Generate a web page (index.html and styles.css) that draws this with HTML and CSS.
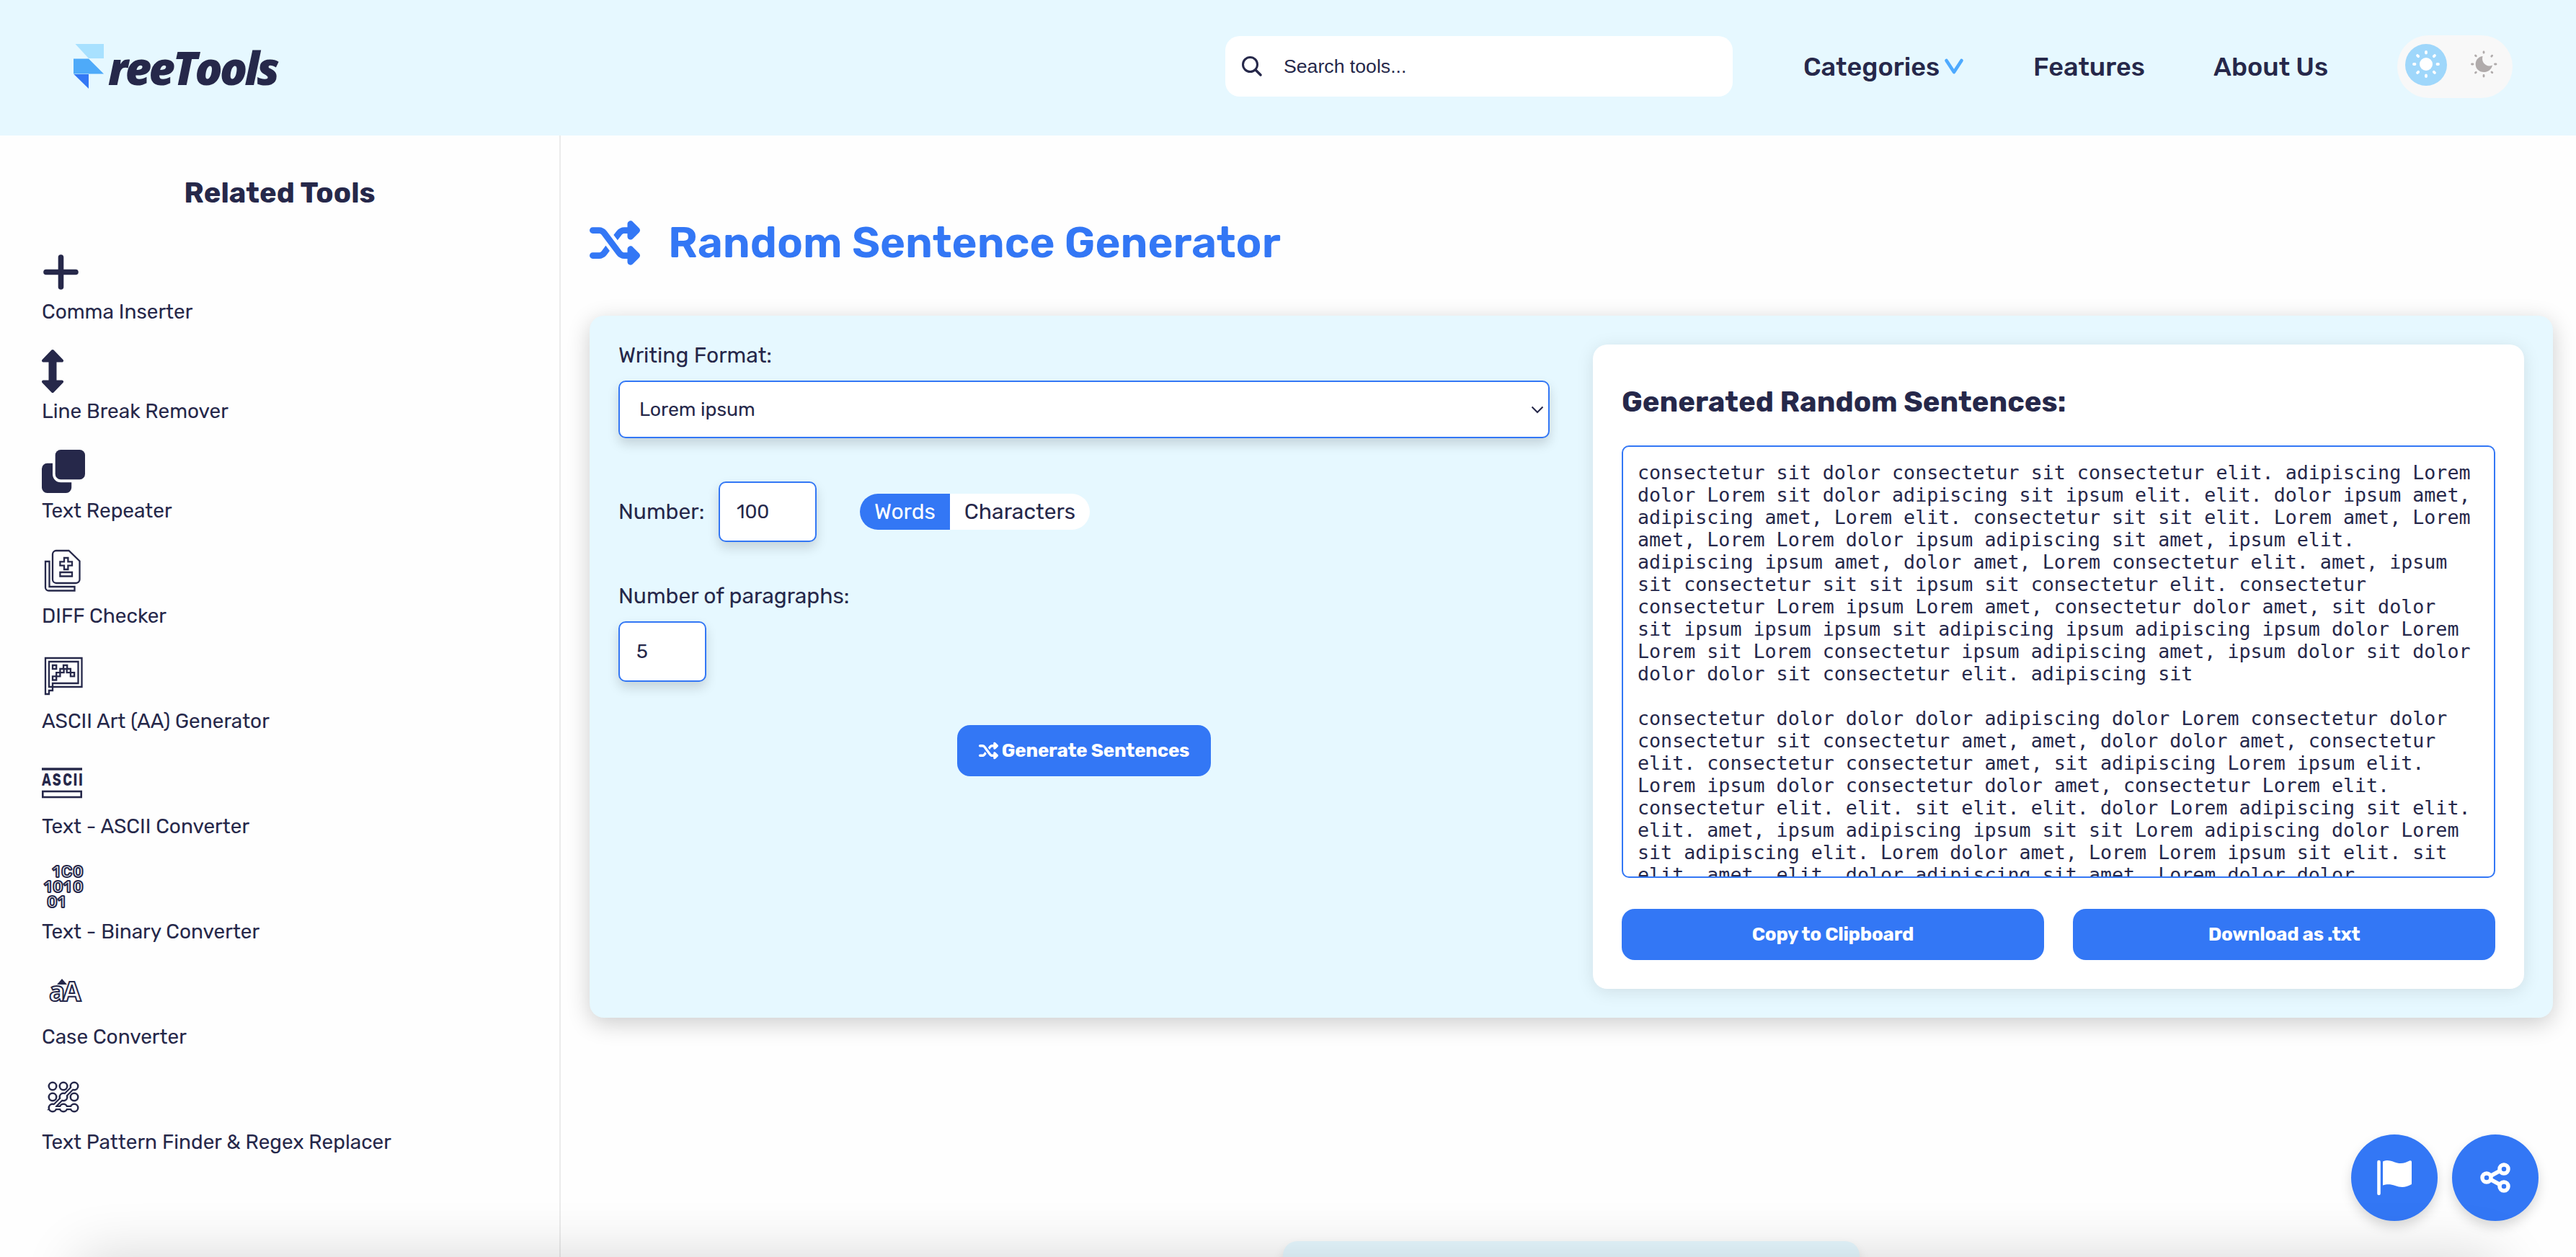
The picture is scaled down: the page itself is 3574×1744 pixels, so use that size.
FILE: index.html
```html
<!DOCTYPE html>
<html lang="en">
<head>
    <meta charset="UTF-8">
    <meta name="viewport" content="width=device-width, initial-scale=1.0">
    <title>Random Sentence Generator</title>
    <link rel="stylesheet" href="styles.css">
</head>
<body>
    <svg class="defs" width="0" height="0">
        <symbol id="shuffle" viewBox="0 0 512 512">
            <path fill="currentColor" d="M403.8 34.4c12-5 25.7-2.2 34.9 6.9l64 64c6 6 9.4 14.1 9.4 22.6s-3.4 16.6-9.4 22.6l-64 64c-9.2 9.2-22.9 11.9-34.9 6.9s-19.8-16.6-19.8-29.6V160H352c-10.1 0-19.6 4.7-25.6 12.8L284 229.3 244 176l31.2-41.6C293.3 110.2 321.8 96 352 96h32V64c0-12.9 7.8-24.6 19.8-29.6zM164 282.7L204 336l-31.2 41.6C154.7 401.8 126.2 416 96 416H32c-17.7 0-32-14.3-32-32s14.3-32 32-32H96c10.1 0 19.6-4.7 25.6-12.8L164 282.7zm274.6 188c-9.2 9.2-22.9 11.9-34.9 6.9s-19.8-16.6-19.8-29.6V416H352c-30.2 0-58.7-14.2-76.8-38.4L121.6 172.8c-6-8.1-15.5-12.8-25.6-12.8H32c-17.7 0-32-14.3-32-32s14.3-32 32-32H96c30.2 0 58.7 14.2 76.8 38.4L326.4 339.2c6 8.1 15.5 12.8 25.6 12.8h32V320c0-12.9 7.8-24.6 19.8-29.6s25.7-2.2 34.9 6.9l64 64c6 6 9.4 14.1 9.4 22.6s-3.4 16.6-9.4 22.6l-64 64z"/>
        </symbol>
    </svg>

    <header class="header">
        <a class="logo">
            <svg width="42" height="62" viewBox="0 0 42 62">
                <path fill="#a8e1ff" d="M2.500 0H42V20H21z"/>
                <path fill="#4eaaf9" d="M0 20.500H21L42 41.500H0z"/>
                <path fill="#3377f5" d="M0.500 42H21V62z"/>
            </svg>
            <span class="logo-text">reeTools</span>
        </a>
        <div class="search">
            <svg width="30" height="30" viewBox="0 0 30 30">
                <circle cx="12.500" cy="12.500" r="10" fill="none" stroke="#26284a" stroke-width="3"/>
                <path d="M20 20l7 7" stroke="#26284a" stroke-width="3.500" stroke-linecap="round"/>
            </svg>
            <input type="text" placeholder="Search tools...">
        </div>
        <nav class="nav">
            <a class="categories">Categories
                <svg width="26" height="21" viewBox="0 0 26 21">
                    <path d="M2.500 2l10.500 16L23.500 2" fill="none" stroke="#4eaaff" stroke-width="4.600" stroke-linecap="round" stroke-linejoin="round"/>
                </svg>
            </a>
            <a class="features">Features</a>
            <a class="about">About Us</a>
        </nav>
        <div class="theme">
            <span class="theme-btn active">
                <svg width="38" height="38" viewBox="0 0 38 38">
                    <circle cx="19" cy="19" r="9" fill="#fff"/>
                    <g stroke="#fff" stroke-width="3.800" stroke-linecap="round">
                        <path d="M19 2v1.500M19 34.500V36M2 19h1.500M34.500 19H36M7 7l1.200 1.200M29.800 29.800L31 31M7 31l1.200-1.200M29.800 8.200L31 7"/>
                    </g>
                </svg>
            </span>
            <span class="theme-btn">
                <svg width="38" height="38" viewBox="0 0 38 38">
                    <path d="M17.500 8C8 9 5 20 10.500 26.500C16.500 33 29 30.500 31 20.500C23 24 15 17 17.500 8z" fill="#b0abab"/>
                    <g stroke="#b0abab" stroke-width="2.800" stroke-linecap="round">
                        <path d="M19 2v1.200M19 34.500V36M2.500 19H4M34.500 19H36M7.500 7l.8.800M30 30l.8.800M7.500 31l.8-.8M29.800 8.200l.8-1"/>
                    </g>
                </svg>
            </span>
        </div>
    </header>

    <div class="page">
        <aside class="sidebar">
            <h3>Related Tools</h3>
            <ul>
                <li>
                    <svg width="60" height="60" viewBox="0 0 60 60">
                        <path d="M6 29.500h41M26.500 9v41" stroke="#26284a" stroke-width="7.600" stroke-linecap="round"/>
                    </svg>
                    <span>Comma Inserter</span>
                </li>
                <li>
                    <svg width="60" height="60" viewBox="0 0 60 60">
                        <path d="M15 1L28 14.500H2z M15 57L28 43.500H2z" fill="#26284a" stroke="#26284a" stroke-width="4" stroke-linejoin="round"/>
                        <path d="M15 10V50" stroke="#26284a" stroke-width="11"/>
                    </svg>
                    <span>Line Break Remover</span>
                </li>
                <li>
                    <svg width="60" height="60" viewBox="0 0 60 60">
                        <path d="M7.500 18.700H15V34a11.200 11.200 0 0 0 11.200 11.200H41.200V52.500a7.500 7.500 0 0 1-7.500 7.500H7.500A7.500 7.500 0 0 1 0 52.500V26.200a7.500 7.500 0 0 1 7.500-7.500z" fill="#26284a"/>
                        <rect x="18.700" y="0" width="41.300" height="41.300" rx="7.500" fill="#26284a"/>
                    </svg>
                    <span>Text Repeater</span>
                </li>
                <li>
                    <svg width="60" height="68" viewBox="0 0 60 68">
                        <g fill="none" stroke="#26284a" stroke-width="2.300">
                            <path d="M20 2H37.500L52.500 16.500V42a5 5 0 0 1-5 5H20a5 5 0 0 1-5-5V7a5 5 0 0 1 5-5z"/>
                            <path d="M5 17H10.500V52H45.500V57.500H9.500A4.500 4.500 0 0 1 5 53z"/>
                            <path d="M31 12h5.400v5.300h5.600v5.400h-5.600V28H31v-5.300h-5.600v-5.400H31zM25.400 32H42v5.500H25.400z"/>
                        </g>
                    </svg>
                    <span>DIFF Checker</span>
                </li>
                <li>
                    <svg width="60" height="68" viewBox="0 0 60 68">
                        <g fill="none" stroke="#26284a" stroke-width="2.300">
                            <path d="M5 5H55.500V45H15V50H10V55H5z"/>
                            <path d="M10 10H50.500V40H15V45H10z"/>
                            <path d="M15 15h5.200v5.200H15zM15 30.300h5.200v5.200H15zM20.200 25.100h5.200v5.200h-5.200zM25.400 20h5.200v5.200h-5.200zM30 15h5.200v5.200H30zM34.700 20h5.200v5.200h-5.200zM39.900 25.100h5.200v5.200h-5.200z"/>
                        </g>
                    </svg>
                    <span>ASCII Art (AA) Generator</span>
                </li>
                <li>
                    <svg width="60" height="68" viewBox="0 0 60 68">
                        <path d="M0 13H56" stroke="#26284a" stroke-width="3.500"/>
                        <text class="ascii-text" transform="scale(0.72 1)" x="0 20.500 40.500 60.500 71" y="36.500">ASCII</text>
                        <rect x="1.300" y="44" width="53.400" height="8" fill="none" stroke="#26284a" stroke-width="2.600"/>
                    </svg>
                    <span>Text - ASCII Converter</span>
                </li>
                <li>
                    <svg width="60" height="68" viewBox="0 0 60 68">
                        <g class="binary-text">
                            <text x="14.500 27 43" y="17">1C0</text>
                            <text x="3 15 30 43" y="38">1010</text>
                            <text x="7 22" y="59">01</text>
                        </g>
                    </svg>
                    <span>Text - Binary Converter</span>
                </li>
                <li>
                    <svg width="60" height="68" viewBox="0 0 60 68">
                        <path d="M28 12L35 20H21z" fill="#26284a"/>
                        <text class="case-text" x="10 29" y="43">aA</text>
                    </svg>
                    <span>Case Converter</span>
                </li>
                <li>
                    <svg width="60" height="68" viewBox="0 0 60 68">
                        <g fill="#26284a">
                            <circle cx="15" cy="15" r="6.500"/><circle cx="30" cy="15" r="6.500"/><circle cx="45" cy="15" r="6.500"/>
                            <circle cx="15" cy="30" r="6.500"/><circle cx="30" cy="30" r="6.500"/><circle cx="45" cy="30" r="6.500"/>
                            <circle cx="15" cy="45" r="6.500"/><circle cx="30" cy="45" r="6.500"/><circle cx="45" cy="45" r="6.500"/>
                        </g>
                        <path d="M45 15L15 45H45" fill="none" stroke="#26284a" stroke-width="6.500"/>
                        <g fill="#fff">
                            <circle cx="15" cy="15" r="4"/><circle cx="30" cy="15" r="4"/><circle cx="45" cy="15" r="4"/>
                            <circle cx="15" cy="30" r="4"/><circle cx="30" cy="30" r="4"/><circle cx="45" cy="30" r="4"/>
                            <circle cx="15" cy="45" r="4"/><circle cx="30" cy="45" r="4"/><circle cx="45" cy="45" r="4"/>
                        </g>
                        <path d="M45 15L15 45H45" fill="none" stroke="#fff" stroke-width="2.200"/>
                    </svg>
                    <span>Text Pattern Finder &amp; Regex Replacer</span>
                </li>
            </ul>
        </aside>

        <main class="main">
            <h1>
                <svg width="70" height="70"><use href="#shuffle"/></svg>
                <span>Random Sentence Generator</span>
            </h1>

            <section class="tool">
                <div class="form">
                    <label for="format">Writing Format:</label>
                    <div class="select">
                        <select id="format">
                            <option>Lorem ipsum</option>
                        </select>
                        <svg width="18" height="11" viewBox="0 0 18 11">
                            <path d="M1.500 1.500L9 9l7.500-7.500" fill="none" stroke="#26284a" stroke-width="2"/>
                        </svg>
                    </div>
                    <div class="number-row">
                        <label for="number">Number:</label>
                        <input type="text" id="number" class="field number" value="100">
                        <div class="unit">
                            <span class="selected">Words</span>
                            <span>Characters</span>
                        </div>
                    </div>
                    <label for="paragraphs">Number of paragraphs:</label>
                    <input type="text" id="paragraphs" class="field paragraphs" value="5">
                    <button class="btn generate">
                        <svg width="27" height="27"><use href="#shuffle"/></svg>
                        <span>Generate Sentences</span>
                    </button>
                </div>

                <div class="output">
                    <h2>Generated Random Sentences:</h2>
                    <textarea readonly>consectetur sit dolor consectetur sit consectetur elit. adipiscing Lorem dolor Lorem sit dolor adipiscing sit ipsum elit. elit. dolor ipsum amet, adipiscing amet, Lorem elit. consectetur sit sit elit. Lorem amet, Lorem amet, Lorem Lorem dolor ipsum adipiscing sit amet, ipsum elit. adipiscing ipsum amet, dolor amet, Lorem consectetur elit. amet, ipsum sit consectetur sit sit ipsum sit consectetur elit. consectetur consectetur Lorem ipsum Lorem amet, consectetur dolor amet, sit dolor sit ipsum ipsum ipsum sit adipiscing ipsum adipiscing ipsum dolor Lorem Lorem sit Lorem consectetur ipsum adipiscing amet, ipsum dolor sit dolor dolor dolor sit consectetur elit. adipiscing sit

consectetur dolor dolor dolor adipiscing dolor Lorem consectetur dolor consectetur sit consectetur amet, amet, dolor dolor amet, consectetur elit. consectetur consectetur amet, sit adipiscing Lorem ipsum elit. Lorem ipsum dolor consectetur dolor amet, consectetur Lorem elit. consectetur elit. elit. sit elit. elit. dolor Lorem adipiscing sit elit. elit. amet, ipsum adipiscing ipsum sit sit Lorem adipiscing dolor Lorem sit adipiscing elit. Lorem dolor amet, Lorem Lorem ipsum sit elit. sit elit. amet, elit. dolor adipiscing sit amet, Lorem dolor dolor</textarea>
                    <div class="output-actions">
                        <button class="btn">Copy to Clipboard</button>
                        <button class="btn">Download as .txt</button>
                    </div>
                </div>
            </section>

            <section class="about-tool"></section>
        </main>
    </div>

    <div class="fabs">
        <a class="fab">
            <svg width="50" height="50" viewBox="0 0 50 50">
                <path d="M3.500 3V47" stroke="#fff" stroke-width="4.600" stroke-linecap="round"/>
                <path d="M9 2.500C18-1 22 3 29 4.500C36 6 41 4 46 1.500C48 .8 49 1.500 49 3.500V34C40 39.500 33 38.500 26 36C20 33.800 15 33.500 9 35.500z" fill="#fff"/>
            </svg>
        </a>
        <a class="fab">
            <svg width="46" height="46" viewBox="0 0 46 46">
                <g fill="none" stroke="#fff" stroke-width="5.500">
                    <path d="M12 23L34 11M12 23L34 35"/>
                    <circle cx="11" cy="23" r="6" fill="#3377f5"/>
                    <circle cx="35" cy="11" r="6" fill="#3377f5"/>
                    <circle cx="35" cy="35" r="6" fill="#3377f5"/>
                </g>
            </svg>
        </a>
    </div>
    <div class="bottom-shade"></div>
</body>
</html>
```

FILE: styles.css
```css
* {
    box-sizing: border-box;
}

body {
    margin: 0;
    height: 1744px;
    overflow: hidden;
    font-family: Rubik, Roboto, sans-serif;
    font-size: 30px;
    color: #26284a;
    background-color: #fefefe;
}

svg {
    display: block;
    flex: none;
    overflow: visible;
}

.defs {
    display: none;
}

h1, h2, h3, ul {
    margin: 0;
    padding: 0;
}

input, select, textarea, button {
    font-family: Rubik, Roboto, sans-serif;
    font-size: 26.67px;
    color: #26284a;
    margin: 0;
}

/* header */
.header {
    display: flex;
    align-items: center;
    height: 188px;
    padding: 0 88px 4px 102px;
    background-color: #e6f8ff;
}

.logo {
    display: flex;
    align-items: center;
    gap: 6px;
    margin-right: auto;
    height: 62px;
}

.logo-text {
    padding-top: 4px;
    font-family: "Open Sans", sans-serif;
    font-size: 63px;
    font-weight: 800;
    font-style: italic;
    line-height: 62px;
    letter-spacing: -3.7px;
}

.search {
    display: flex;
    align-items: center;
    gap: 29px;
    width: 704px;
    height: 84px;
    padding-left: 22px;
    margin-right: 98px;
    background-color: #fff;
    border-radius: 20px;
}

.search input {
    flex: 1;
    padding: 0;
    border: none;
    outline: none;
    background: none;
    font-family: "Liberation Sans", Arial, sans-serif;
}

.search input::placeholder {
    color: #26284a;
    opacity: 1;
}

.nav {
    display: flex;
    gap: 97px;
    margin-right: 97px;
    font-size: 36px;
    font-weight: 500;
    white-space: nowrap;
}

.categories {
    display: flex;
    align-items: center;
    justify-content: space-between;
    width: 222px;
}

.features {
    width: 153px;
}

.about {
    width: 158px;
}

.theme {
    display: flex;
    align-items: center;
    gap: 22px;
    width: 160px;
    height: 87px;
    padding: 0 11px 4px;
    background-color: #f8f8f8;
    border-radius: 44px;
}

.theme-btn {
    display: flex;
    align-items: center;
    justify-content: center;
    width: 58px;
    height: 58px;
    padding-bottom: 2px;
    border-radius: 50%;
}

.theme-btn.active {
    background-color: #9fd7fb;
}

/* layout */
.page {
    display: flex;
    height: 1556px;
    overflow: hidden;
}

.sidebar {
    width: 778px;
    padding: 56px 58px 0;
    border-right: 2px solid #ebebeb;
}

.sidebar h3 {
    margin-bottom: 56px;
    font-size: 40px;
    font-weight: 700;
    line-height: 48px;
    text-align: center;
}

.sidebar ul {
    list-style: none;
}

.sidebar li {
    margin-bottom: 36px;
}

.sidebar li span {
    display: block;
    margin-top: 8px;
    font-size: 28px;
    line-height: 34px;
}

.ascii-text {
    font-size: 25px;
    font-weight: 700;
    fill: #26284a;
}

.binary-text {
    font-size: 22px;
    font-weight: 600;
    fill: #fff;
    stroke: #26284a;
    stroke-width: 2px;
}

.case-text {
    font-family: "Open Sans", sans-serif;
    font-size: 37px;
    font-weight: 700;
    fill: #fff;
    stroke: #26284a;
    stroke-width: 2px;
}

.main {
    flex: 1;
    padding: 112px 32px 0 40px;
}

h1 {
    display: flex;
    align-items: center;
    gap: 39px;
    height: 74px;
    margin-bottom: 64px;
    font-size: 60px;
    line-height: 74px;
    font-weight: 600;
    color: #3377f5;
}

/* generator */
.tool {
    display: grid;
    grid-template-columns: 1fr 1fr;
    gap: 60px;
    height: 974px;
    padding: 40px;
    background-color: #e6f8ff;
    border-radius: 20px;
    box-shadow: 0 8px 32px rgba(0, 0, 0, 0.2);
}

.form {
    display: flex;
    flex-direction: column;
    align-items: flex-start;
}

.form > label {
    margin-bottom: 20px;
}

label {
    line-height: 30px;
}

.select {
    display: flex;
    align-items: center;
    width: 100%;
    height: 80px;
    padding-right: 6px;
    margin-bottom: 60px;
    background-color: #fff;
    border: 2px solid #3377f5;
    border-radius: 10px;
    box-shadow: 0 8px 16px rgba(0, 0, 0, 0.15);
}

.select select {
    flex: 1;
    height: 76px;
    padding: 0 27px;
    appearance: none;
    border: none;
    background: none;
}

.number-row {
    display: flex;
    align-items: center;
    margin-bottom: 60px;
}

.field {
    height: 84px;
    padding: 0 23px;
    background-color: #fff;
    border: 2px solid #3377f5;
    border-radius: 10px;
    box-shadow: 0 8px 16px rgba(0, 0, 0, 0.15);
}

.number-row label {
    width: 139px;
}

.number {
    width: 136px;
}

.paragraphs {
    width: 122px;
}

.unit {
    display: flex;
    margin-left: 60px;
    height: 50px;
    line-height: 50px;
    background-color: #fff;
    border-radius: 25px;
    overflow: hidden;
}

.unit span {
    padding: 0 20px;
}

.unit .selected {
    color: #fff;
    background-color: #3377f5;
}

.btn {
    display: flex;
    align-items: center;
    justify-content: center;
    gap: 5px;
    height: 71px;
    border: none;
    border-radius: 18px;
    font-size: 26px;
    font-weight: 700;
    letter-spacing: -0.25px;
    color: #fff;
    background-color: #3377f5;
    cursor: pointer;
}

.generate {
    width: 352px;
    margin-top: 60px;
    align-self: center;
}

.output {
    padding: 56px 40px 0;
    background-color: #fff;
    border-radius: 20px;
    box-shadow: 0 4px 24px rgba(0, 0, 0, 0.1);
}

.output h2 {
    margin-bottom: 36px;
    font-size: 40px;
    font-weight: 700;
    line-height: 48px;
}

.output textarea {
    display: block;
    width: 100%;
    height: 600px;
    padding: 20px;
    overflow: hidden;
    resize: none;
    outline: none;
    font-family: "DejaVu Sans Mono", monospace;
    line-height: 31px;
    background-color: #fff;
    border: 2px solid #3377f5;
    border-radius: 10px;
}

.output-actions {
    display: flex;
    gap: 40px;
    margin-top: 43px;
}

.output-actions .btn {
    flex: 1;
}

.about-tool {
    width: 800px;
    height: 200px;
    margin: 310px auto 0;
    background-color: #e6f8ff;
    border-radius: 20px;
    box-shadow: 0 8px 16px rgba(0, 0, 0, 0.1);
}

/* floating buttons */
.fabs {
    position: fixed;
    right: 52px;
    bottom: 50px;
    display: flex;
    gap: 20px;
}

.fab {
    display: flex;
    align-items: center;
    justify-content: center;
    width: 120px;
    height: 120px;
    border-radius: 50%;
    background-color: #3377f5;
    box-shadow: 0 8px 16px rgba(0, 0, 0, 0.15);
}

.bottom-shade {
    position: fixed;
    left: 110px;
    right: 110px;
    bottom: -200px;
    height: 200px;
    box-shadow: 0 0 80px rgba(0, 0, 0, 0.16);
}
```
